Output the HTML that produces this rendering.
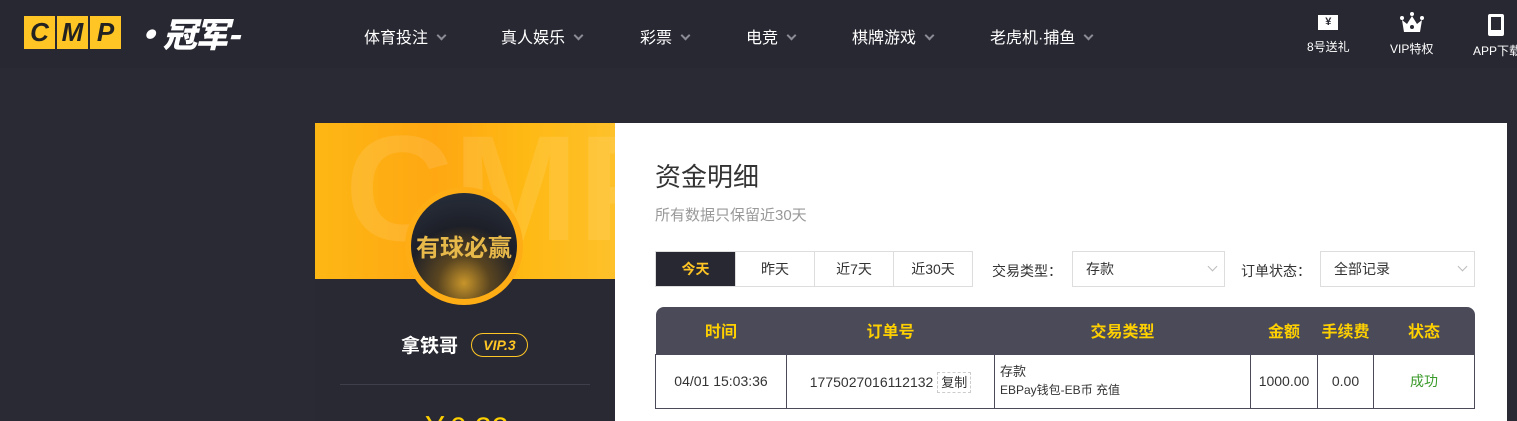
<!DOCTYPE html>
<html><head><meta charset="utf-8"><style>
*{margin:0;padding:0;box-sizing:border-box}
html,body{width:1517px;height:421px;overflow:hidden}
body{background:#292a34;font-family:"Liberation Sans","Noto Sans CJK SC",sans-serif;position:relative}
.hdr{position:absolute;left:0;top:0;width:1517px;height:68px;background:#282833}
.logo{position:absolute;left:24px;top:16px;display:flex}
.logo span{display:inline-block;width:31px;height:33px;background:#fec524;color:#222;font:italic 900 26px/33px "Liberation Sans",sans-serif;text-align:center;margin-right:2px}
.logo b{color:#fff;font:italic 900 34px/33px "Noto Sans CJK SC",sans-serif;margin-left:8px;letter-spacing:-2px}
.nav{position:absolute;top:24px;color:#fff;font-size:16px;white-space:nowrap}
.nav i{display:inline-block;width:7px;height:7px;border-right:2px solid #8b8c96;border-bottom:2px solid #8b8c96;transform:rotate(45deg);margin-left:10px;vertical-align:4px}
.ic{position:absolute;top:12px;color:#fff;font-size:12px;text-align:center;white-space:nowrap}
.panel{position:absolute;left:615px;top:123px;width:892px;height:298px;background:#fff}
.side{position:absolute;left:315px;top:123px;width:300px;height:298px;background:#292933;overflow:hidden}
.ban{position:absolute;left:0;top:0;width:300px;height:156px;background:linear-gradient(90deg,#fdb714,#fea712 40%,#feb914 70%,#fec12a);overflow:hidden}
.ban div{position:absolute;left:30px;top:-10px;font:700 150px/1 "Liberation Sans",sans-serif;color:rgba(255,255,255,.1)}
.av{position:absolute;left:90px;top:64px;width:118px;height:118px;border-radius:50%;background:#fead14;padding:6px}
.av div{width:106px;height:106px;border-radius:50%;background:radial-gradient(circle at 50% 85%,#c8952a 0,#5a4520 25%,#1d1f28 55%,#2b3440);color:#e7b84a;font:700 24px/106px "Noto Sans CJK SC",sans-serif;text-align:center}
.t{position:absolute;white-space:nowrap}
.tabs{position:absolute;left:655px;top:251px;height:36px;display:flex;border:1px solid #ddd}
.tabs div{width:79px;text-align:center;line-height:34px;font-size:14px;color:#333;border-left:1px solid #ddd}
.tabs div:first-child{border:0;background:#282833;color:#fec524;font-weight:700}
.sel{position:absolute;top:251px;height:36px;border:1px solid #ddd;font-size:14px;color:#333;line-height:34px;padding-left:13px}
.sel i{position:absolute;right:8px;top:11px;width:7px;height:7px;border-right:1px solid #bbb;border-bottom:1px solid #bbb;transform:rotate(45deg)}
table{position:absolute;left:655px;top:307px;width:820px;border-collapse:collapse;font-size:14px;color:#333}
th{background:#4a4a59;color:#fed000;height:47px;font-size:16px}
td{border:1px solid #4a4a59;height:54px;text-align:center}
</style></head><body>
<div class="hdr">
<div class="logo"><span>C</span><span>M</span><span>P</span><b>·冠军-</b></div>
<div class="nav" style="left:364px">体育投注<i></i></div>
<div class="nav" style="left:501px">真人娱乐<i></i></div>
<div class="nav" style="left:640px">彩票<i></i></div>
<div class="nav" style="left:746px">电竞<i></i></div>
<div class="nav" style="left:852px">棋牌游戏<i></i></div>
<div class="nav" style="left:990px">老虎机·捕鱼<i></i></div>
<div class="ic" style="left:1307px"><div style="width:20px;height:15px;background:#fff;margin:3px auto 8px;color:#282833;font-size:11px;line-height:15px;font-weight:700">¥</div>8号送礼</div>
<div class="ic" style="left:1390px"><div style="margin:0 auto 6px;width:24px;height:22px"><svg width="24" height="22" viewBox="0 0 24 22"><circle cx="12" cy="2" r="2" fill="#fff"/><circle cx="2" cy="6" r="2" fill="#fff"/><circle cx="22" cy="6" r="2" fill="#fff"/><path d="M2 8L7 12L12 4L17 12L22 8L20 20H4Z" fill="#fff"/><circle cx="12" cy="15" r="2" fill="#282833"/></svg></div>VIP特权</div>
<div class="ic" style="left:1473px;text-align:left"><div style="width:16px;height:22px;border:3px solid #fff;border-bottom-width:6px;margin:2px 0 6px 15px;border-radius:2px"></div>APP下载</div>
</div>
<div class="side"><div class="ban"><div>CMP</div></div>
<div class="av"><div>有球必赢</div></div>
<div class="t" style="left:86px;top:208px;color:#fff;font-size:19px;font-weight:700">拿铁哥</div>
<div class="t" style="left:156px;top:210px;width:57px;height:24px;border:1px solid #fec524;border-radius:12px;color:#fec524;font:italic 700 14px/22px 'Liberation Sans',sans-serif;text-align:center">VIP.3</div>
<div style="position:absolute;left:25px;top:261px;width:250px;height:1px;background:#3e3f4a"></div>
<div class="t" style="left:105px;top:280px;color:#fed000;font-size:30px">￥0.32</div>
</div>
<div class="panel"></div>
<div class="t" style="left:655px;top:157px;font-size:26px;color:#333">资金明细</div>
<div class="t" style="left:655px;top:204px;font-size:15px;color:#999">所有数据只保留近30天</div>
<div class="tabs"><div>今天</div><div>昨天</div><div>近7天</div><div>近30天</div></div>
<div class="t" style="left:992px;top:261px;font-size:14px;color:#333">交易类型：</div>
<div class="sel" style="left:1072px;width:153px">存款<i></i></div>
<div class="t" style="left:1241px;top:261px;font-size:14px;color:#333">订单状态：</div>
<div class="sel" style="left:1320px;width:155px">全部记录<i></i></div>
<table><tr><th style="width:131px;border-radius:8px 0 0 0">时间</th><th style="width:208px">订单号</th><th style="width:256px">交易类型</th><th style="width:67px">金额</th><th style="width:56px">手续费</th><th style="border-radius:0 8px 0 0">状态</th></tr>
<tr><td>04/01 15:03:36</td><td>1775027016112132 <span style="border:1px dashed #ccc;padding:2px 3px;font-size:13px">复制</span></td><td style="text-align:left;padding-left:5px;font-size:13px;line-height:18px">存款<br><span style="font-size:12px">EBPay钱包-EB币 充值</span></td><td>1000.00</td><td>0.00</td><td style="color:#3a9a2a">成功</td></tr></table>
</body></html>
